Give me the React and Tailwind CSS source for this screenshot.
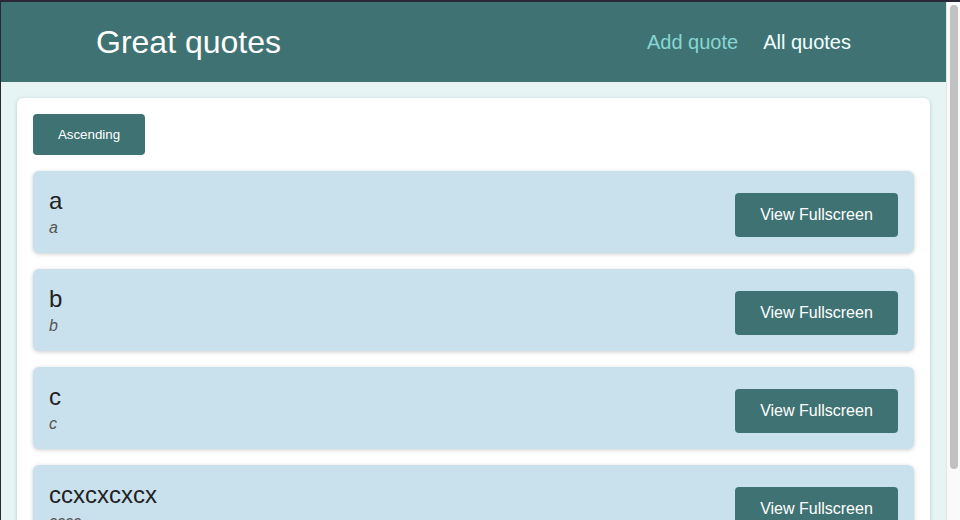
import React from "react";

const quotes = [
  { text: "a", author: "a" },
  { text: "b", author: "b" },
  { text: "c", author: "c" },
  { text: "ccxcxcxcx", author: "cccc" },
];

function QuoteItem({ text, author }) {
  return (
    <li className="h-[82px] shrink-0 rounded-[6px] bg-[#c8e1ec] shadow-[0_1px_4px_rgba(0,0,0,0.2)] px-4 flex justify-between items-start">
      <figure className="pt-4">
        <blockquote className="text-[24px] leading-[28px] text-[#222]">{text}</blockquote>
        <figcaption className="mt-[3px] text-[16px] leading-[20px] italic text-[#555]">{author}</figcaption>
      </figure>
      <button className="mt-[22px] h-[44px] w-[163px] rounded-[4px] bg-[#3f7373] text-white text-[16px] leading-none">
        View Fullscreen
      </button>
    </li>
  );
}

export default function App() {
  return (
    <div className="w-[960px] h-[520px] overflow-hidden bg-[#2a2836] pt-[2px] pl-[1px] flex font-['Liberation_Sans',Arial,sans-serif]">
      <div className="flex-1 min-w-0 bg-[#e6f4f4] flex flex-col overflow-hidden">
        <header className="h-[80px] shrink-0 bg-[#3f7373] flex items-center justify-between px-[95px]">
          <div className="text-[32px] text-white leading-none">Great quotes</div>
          <nav className="flex items-center gap-[25px] text-[20px] leading-none">
            <a className="text-[#88d6d2]">Add quote</a>
            <a className="text-[#f2ffff]">All quotes</a>
          </nav>
        </header>
        <main className="px-4 pt-4">
          <div className="bg-white rounded-[6px] shadow-[0_1px_4px_rgba(0,40,40,0.2)] p-4 h-[500px]">
            <button className="h-[41px] w-[112px] rounded-[4px] bg-[#3f7373] text-white text-[13.33px] leading-none">
              Ascending
            </button>
            <ul className="mt-4 flex flex-col gap-4">
              {quotes.map((q, i) => (
                <QuoteItem key={i} {...q} />
              ))}
            </ul>
          </div>
        </main>
      </div>
      <div className="w-[14px] shrink-0 bg-[#fafafa] border-l border-[#e4e4e4] pt-[3px] pl-[3px] pr-[2px]">
        <div className="h-[464px] w-[8px] rounded-full bg-[#c1c1c1]" />
      </div>
    </div>
  );
}
